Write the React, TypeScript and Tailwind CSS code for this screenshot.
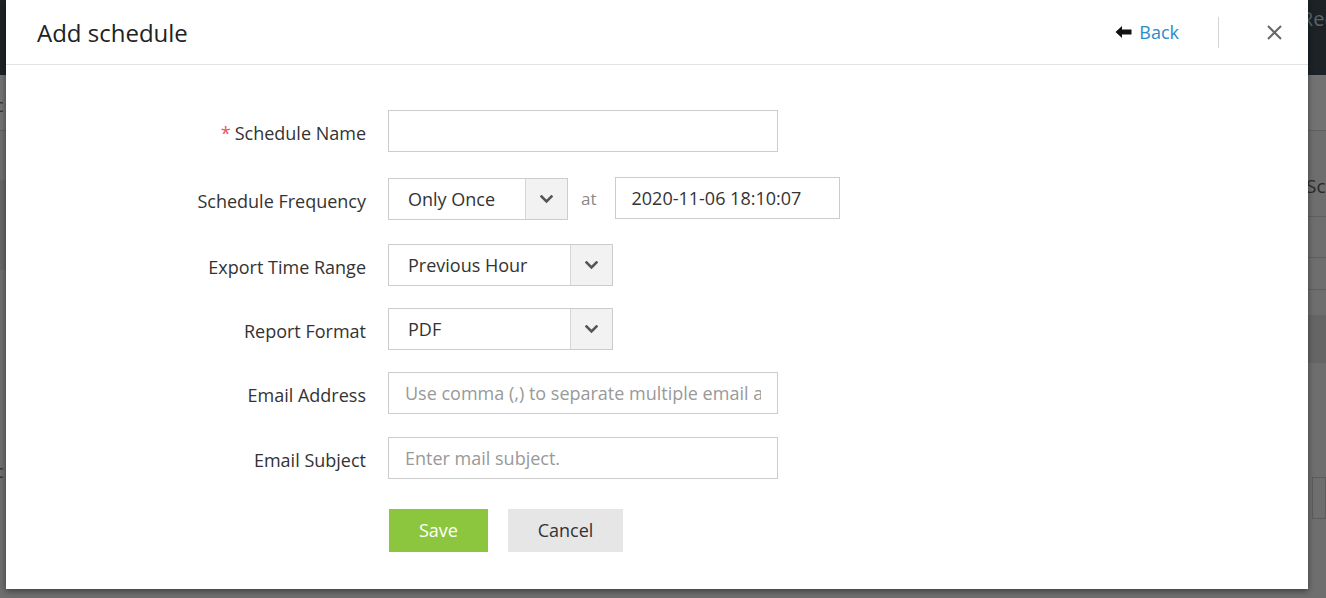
import React from 'react'

const font = { fontFamily: '"Open Sans", "Noto Sans", sans-serif' }

const Chevron = () => (
  <svg width="13" height="9" viewBox="0 0 13 9" fill="none">
    <path d="M1.5 1.5 L6.5 6.5 L11.5 1.5" stroke="#555" strokeWidth="2.6" strokeLinecap="square" />
  </svg>
)

const Select: React.FC<{ value: string; width: string }> = ({ value, width }) => (
  <div className={`${width} h-[42px] border border-[#cccccc] flex bg-white`}>
    <div className="flex-1 flex items-center pl-[19px] text-[18px] text-[#333]">{value}</div>
    <div className="w-[42px] border-l border-[#d6d6d6] bg-[#f2f2f2] flex items-center justify-center">
      <Chevron />
    </div>
  </div>
)

const Row: React.FC<{ label: string; required?: boolean; className?: string; children: React.ReactNode }> = ({ label, required, className, children }) => (
  <div className={`flex items-center ${className ?? ''}`}>
    <div className="w-[360px] pt-[4px] text-right text-[18px] text-[#333] whitespace-nowrap">
      {required && <span className="text-[#f0505a] mr-[4px]">*</span>}
      {label}
    </div>
    <div className="ml-[22px] flex items-center">{children}</div>
  </div>
)

const TextBox: React.FC<{ placeholder?: string; value?: string; width?: string }> = ({ placeholder, value, width = 'w-[390px]' }) => (
  <div className={`${width} h-[42px] border border-[#cccccc] flex items-center px-[16px] text-[18px]`}>
    <div className="w-full overflow-hidden whitespace-nowrap">
      {value ? <span className="text-[#333]">{value}</span> : <span className="text-[#999]">{placeholder}</span>}
    </div>
  </div>
)

export default function App() {
  return (
    <div className="relative w-[1326px] h-[598px] overflow-hidden bg-[#6e6e6e]" style={font}>
      {/* page behind the overlay */}
      <div className="h-[75px] bg-[#1c2226] flex justify-end items-start pt-[4px]">
        <span className="text-[20px] text-[#5a6468] -mr-[8px]">Rec</span>
      </div>
      <div className="absolute left-0 top-[75px] w-full h-[56px] border-b border-[#5f5f5f] bg-[#727272]">
        <span className="absolute -left-[5px] top-[17px] text-[18px] text-[#333]">c</span>
      </div>
      <div className="absolute right-0 top-[160px] w-[20px] h-[57px] border-b border-[#5f5f5f]">
        <span className="text-[19px] text-[#2a2a2a] mt-[12px] block">Sc</span>
      </div>
      <div className="absolute right-0 top-[257px] w-[20px] h-[33px] border-y border-[#5f5f5f]" />
      <div className="absolute right-0 top-[315px] w-[20px] h-[48px] bg-[#656565]" />
      <div className="absolute left-0 top-[180px] w-[6px] h-[90px] bg-[#666]" />
      <span className="absolute left-[-5px] top-[458px] text-[18px] text-[#333]">c</span>
      <div className="absolute right-0 top-[477px] w-[14px] h-[42px] border border-[#5c5c5c]" />

      {/* modal */}
      <div className="absolute left-[6px] top-0 w-[1302px] h-[589px] bg-white shadow-[0_2px_6px_rgba(0,0,0,0.45)]">
        <div className="h-[65px] border-b border-[#e2e2e2] flex items-center pl-[31px] pr-[26px]">
          <h1 className="text-[24px] text-[#222] font-normal flex-1 pt-[2px]">Add schedule</h1>
          <button className="flex items-center gap-[7px] text-[18px] text-[#2a8dc8]">
            <svg width="17" height="14" viewBox="0 0 17 14">
              <path d="M0.5 7 L7 1 L7 4.6 L16.5 4.6 L16.5 9.4 L7 9.4 L7 13 Z" fill="#111" />
            </svg>
            Back
          </button>
          <div className="w-px h-[31px] bg-[#d4d4d4] ml-[39px] mr-[48px]" />
          <svg width="15" height="15" viewBox="0 0 15 15">
            <path d="M1 1 L14 14 M14 1 L1 14" stroke="#666" strokeWidth="2" />
          </svg>
        </div>

        <div className="flex flex-col pt-[45px]">
          <Row label="Schedule Name" required>
            <TextBox />
          </Row>
          <Row label="Schedule Frequency" className="mt-[26px]">
            <Select value="Only Once" width="w-[180px]" />
            <span className="ml-[13px] text-[17px] text-[#888]">at</span>
            <div className="ml-[18px] -mt-[2px]">
              <TextBox value="2020-11-06 18:10:07" width="w-[225px]" />
            </div>
          </Row>
          <Row label="Export Time Range" className="mt-[24px]">
            <Select value="Previous Hour" width="w-[225px]" />
          </Row>
          <Row label="Report Format" className="mt-[22px]">
            <Select value="PDF" width="w-[225px]" />
          </Row>
          <Row label="Email Address" className="mt-[22px]">
            <TextBox placeholder="Use comma (,) to separate multiple email addresses" />
          </Row>
          <Row label="Email Subject" className="mt-[23px]">
            <TextBox placeholder="Enter mail subject." />
          </Row>
          <div className="flex mt-[30px] ml-[383px] gap-[20px]">
            <button className="w-[99px] h-[43px] bg-[#8cc63f] text-white text-[18px]">Save</button>
            <button className="w-[115px] h-[43px] bg-[#e6e6e6] text-[#333] text-[18px]">Cancel</button>
          </div>
        </div>
      </div>
    </div>
  )
}
